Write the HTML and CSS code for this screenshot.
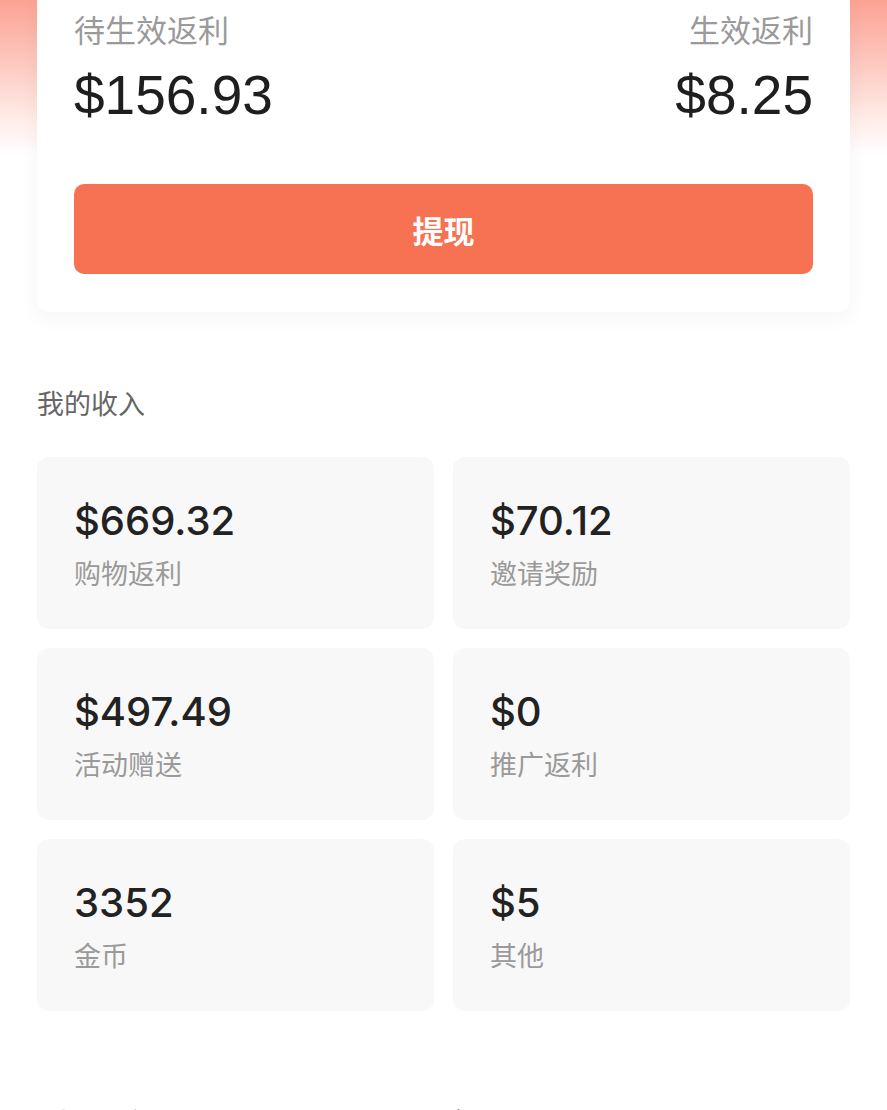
FILE: index.html
```html
<!DOCTYPE html>
<html lang="zh-CN">
<head>
<meta charset="utf-8">
<title>我的收入</title>
<link rel="stylesheet" href="styles.css">
</head>
<body>
<div class="page">
  <section class="summary">
    <div class="summary-row">
      <div class="summary-item">
        <div class="summary-label">待生效返利</div>
        <div class="summary-value">$156.93</div>
      </div>
      <div class="summary-item right">
        <div class="summary-label">生效返利</div>
        <div class="summary-value">$8.25</div>
      </div>
    </div>
    <button class="withdraw">提现</button>
  </section>

  <h2 class="section-title">我的收入</h2>

  <div class="income-grid">
    <div class="income-card"><div class="income-value">$669.32</div><div class="income-label">购物返利</div></div>
    <div class="income-card"><div class="income-value">$70.12</div><div class="income-label">邀请奖励</div></div>
    <div class="income-card"><div class="income-value">$497.49</div><div class="income-label">活动赠送</div></div>
    <div class="income-card"><div class="income-value">$0</div><div class="income-label">推广返利</div></div>
    <div class="income-card"><div class="income-value">3352</div><div class="income-label">金币</div></div>
    <div class="income-card"><div class="income-value">$5</div><div class="income-label">其他</div></div>
  </div>

  <div class="next-section">
    <span class="next-title">收入明细记录</span>
    <span class="next-title">提现</span>
  </div>
</div>
</body>
</html>
```

FILE: styles.css
```css
html, body {
  margin: 0;
  padding: 0;
  background: #ffffff;
}

body {
  font-family: Inter, "Noto Sans CJK SC", sans-serif;
  width: 887px;
  overflow: hidden;
}

.page {
  background: linear-gradient(180deg, #fca293 0px, #fdcdc4 70px, #fff0ec 125px, #ffffff 155px) no-repeat;
  background-size: 100% 160px;
  padding-bottom: 40px;
}

.summary {
  margin: 0 37px;
  padding: 9px 37px 38px;
  background: #ffffff;
  border-radius: 0 0 12px 12px;
  box-shadow: 0 6px 22px rgba(0, 0, 0, 0.045);
}

.summary-row {
  display: flex;
  justify-content: space-between;
}

.summary-item.right {
  text-align: right;
}

.summary-label {
  font-family: "Noto Sans CJK SC", sans-serif;
  font-size: 31px;
  line-height: 40px;
  color: #9a9a9a;
}

.summary-value {
  margin-top: 13px;
  font-family: "Liberation Sans", Arial, sans-serif;
  font-size: 55px;
  line-height: 66px;
  color: #1e1e1e;
}

.withdraw {
  display: block;
  width: 100%;
  height: 90px;
  margin-top: 56px;
  border: none;
  border-radius: 10px;
  background: #f77252;
  color: #ffffff;
  font-family: "Noto Sans CJK SC", sans-serif;
  font-weight: 700;
  font-size: 31px;
  padding: 0;
}

.section-title {
  margin: 73px 37px 36px;
  font-family: "Noto Sans CJK SC", sans-serif;
  font-weight: 400;
  font-size: 27px;
  line-height: 36px;
  color: #666666;
}

.income-grid {
  display: grid;
  grid-template-columns: 1fr 1fr;
  gap: 19px;
  margin: 0 37px;
}

.income-card {
  height: 172px;
  box-sizing: border-box;
  padding: 40px 37px 0;
  background: #f8f8f8;
  border-radius: 12px;
}

.income-value {
  font-size: 40px;
  font-weight: 500;
  line-height: 48px;
  color: #222222;
}

.income-label {
  margin-top: 10px;
  font-family: "Noto Sans CJK SC", sans-serif;
  font-size: 27px;
  line-height: 36px;
  color: #9a9a9a;
}

.next-section {
  display: grid;
  grid-template-columns: 1fr 1fr;
  gap: 19px;
  margin: 93px 37px 0;
  padding: 0 10px;
}

.next-title {
  font-family: "Noto Sans CJK SC", sans-serif;
  font-size: 27px;
  line-height: 36px;
  color: #333333;
}
```
